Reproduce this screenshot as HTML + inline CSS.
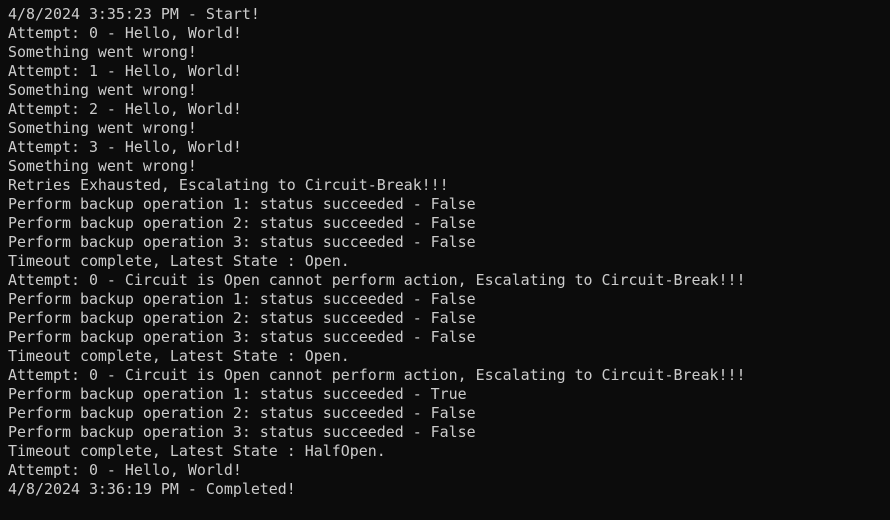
<!DOCTYPE html>
<html><head><meta charset="utf-8"><style>
html,body{margin:0;padding:0;background:#0c0c0c;width:890px;height:520px;overflow:hidden}
pre{margin:0;padding:5px 0 0 8px;font-family:"DejaVu Sans Mono","Liberation Mono",monospace;font-size:14.95px;line-height:19px;color:#cccccc}
</style></head><body><pre>4/8/2024 3:35:23 PM - Start!
Attempt: 0 - Hello, World!
Something went wrong!
Attempt: 1 - Hello, World!
Something went wrong!
Attempt: 2 - Hello, World!
Something went wrong!
Attempt: 3 - Hello, World!
Something went wrong!
Retries Exhausted, Escalating to Circuit-Break!!!
Perform backup operation 1: status succeeded - False
Perform backup operation 2: status succeeded - False
Perform backup operation 3: status succeeded - False
Timeout complete, Latest State : Open.
Attempt: 0 - Circuit is Open cannot perform action, Escalating to Circuit-Break!!!
Perform backup operation 1: status succeeded - False
Perform backup operation 2: status succeeded - False
Perform backup operation 3: status succeeded - False
Timeout complete, Latest State : Open.
Attempt: 0 - Circuit is Open cannot perform action, Escalating to Circuit-Break!!!
Perform backup operation 1: status succeeded - True
Perform backup operation 2: status succeeded - False
Perform backup operation 3: status succeeded - False
Timeout complete, Latest State : HalfOpen.
Attempt: 0 - Hello, World!
4/8/2024 3:36:19 PM - Completed!</pre></body></html>
